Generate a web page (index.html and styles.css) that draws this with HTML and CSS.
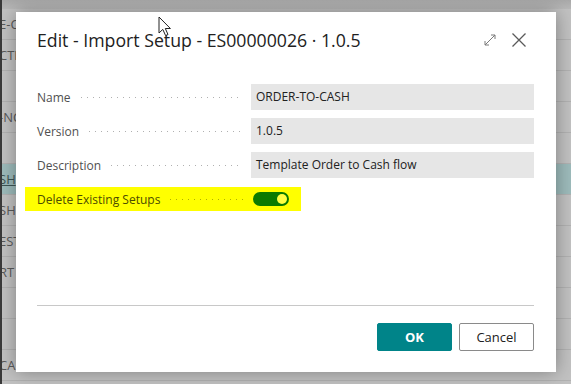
FILE: index.html
```html
<!DOCTYPE html>
<html lang="en">
<head>
  <meta charset="UTF-8" />
  <title>Edit - Import Setup</title>
  <link rel="stylesheet" href="styles.css">
</head>
<body>

  <!-- page behind the dialog (dimmed list) -->
  <div class="page">
    <div class="page-top"></div>
    <div class="row"><span>E-C</span></div>
    <div class="row"><span>CTF</span></div>
    <div class="row"><span></span></div>
    <div class="row"><span>-NC</span></div>
    <div class="row"><span></span></div>
    <div class="row selected"><span class="link">SH</span></div>
    <div class="row"><span>SH</span></div>
    <div class="row"><span>EST</span></div>
    <div class="row"><span>RT</span></div>
    <div class="row"><span></span></div>
    <div class="row"><span></span></div>
    <div class="row"><span>CA</span></div>
  </div>

  <div class="dialog">
    <div class="dialog-head">
      <h1>Edit - Import Setup - ES00000026 · 1.0.5</h1>
      <div class="head-icons">
        <svg width="14" height="14" viewBox="0 0 14 14" class="icon">
          <path d="M2 12 L12 2 M8 2 H12 V6 M2 8 V12 H6" fill="none" stroke="#7a7a7a" stroke-width="1"/>
        </svg>
        <svg width="16" height="16" viewBox="0 0 16 16" class="icon">
          <path d="M1.5 1.5 L14.5 14.5 M14.5 1.5 L1.5 14.5" fill="none" stroke="#5a5a5a" stroke-width="1.3"/>
        </svg>
      </div>
    </div>

    <div class="fields">
      <div class="field">
        <label class="caption">Name</label>
        <div class="value">ORDER-TO-CASH</div>
      </div>
      <div class="field">
        <label class="caption">Version</label>
        <div class="value">1.0.5</div>
      </div>
      <div class="field">
        <label class="caption">Description</label>
        <div class="value">Template Order to Cash flow</div>
      </div>
      <div class="field marked">
        <label class="caption">Delete Existing Setups</label>
        <div class="toggle"><span class="knob"></span></div>
      </div>
    </div>

    <div class="dialog-foot">
      <button class="btn primary">OK</button>
      <button class="btn">Cancel</button>
    </div>
  </div>

  <svg class="cursor" width="14" height="22" viewBox="0 0 14 22">
    <path d="M1 1 V17 L4.8 13.4 L7.6 19.6 L10 18.5 L7.3 12.5 L12.4 12.5 Z" fill="#fff" stroke="#222" stroke-width="1"/>
  </svg>

</body>
</html>
```

FILE: styles.css
```css
html {
  overflow: hidden;
}

body {
  margin: 0;
  width: 571px;
  height: 384px;
  overflow: hidden;
  position: relative;
  font-family: 'Open Sans', 'Noto Sans', sans-serif;
  background: #c2c2c2;
}

.page {
  border-left: 2px solid #3a3a3a;
  height: 100%;
  overflow: hidden;
}

.page-top {
  height: 9px;
  background: linear-gradient(#a9a9a9, #b9b9b9);
}

.row {
  height: 30px;
  border-bottom: 1px solid #b2b2b2;
  display: flex;
  align-items: center;
  font-size: 13px;
  color: #5a5a5a;
}

.row span {
  margin-left: -3px;
}

.row.selected {
  background: #9ebcbc;
}

.link {
  text-decoration: underline;
  color: #3f5656;
}

.dialog {
  position: absolute;
  left: 16px;
  top: 12px;
  width: 540px;
  height: 360px;
  background: #fff;
  box-shadow: 0 0 18px rgba(0, 0, 0, 0.35);
  display: flex;
  flex-direction: column;
  box-sizing: border-box;
  padding: 0 22px 0 21px;
}

.dialog-head {
  display: flex;
  align-items: center;
  justify-content: space-between;
  height: 56px;
}

.dialog-head h1 {
  margin: 0;
  font-size: 17.7px;
  font-weight: 400;
  color: #212121;
}

.head-icons {
  display: flex;
  align-items: center;
  gap: 14px;
  margin-right: 7px;
}

.icon {
  display: block;
}

.fields {
  margin-top: 16px;
  display: flex;
  flex-direction: column;
  gap: 8px;
  flex: 1;
}

.field {
  display: flex;
  align-items: center;
  height: 26px;
}

.caption {
  width: 214px;
  flex: none;
  display: flex;
  align-items: center;
  font-size: 12px;
  color: #505050;
}

.caption::after {
  content: "";
  flex: 1;
  height: 1px;
  margin: 1px 8px 0 10px;
  background: linear-gradient(to right, #b0b0b0 1px, transparent 1px) left center / 6px 1px repeat-x;
}

.value {
  flex: 1;
  height: 26px;
  line-height: 26px;
  padding-left: 5px;
  background: #e6e6e6;
  font-size: 12px;
  color: #212121;
}

.field.marked {
  margin: 1px 0 0 -12px;
  padding-left: 12px;
  width: 264px;
  height: 24px;
  background: #ffff00;
}

.field.marked .caption {
  color: #4c4c00;
}

.field.marked .caption::after {
  background: linear-gradient(to right, #b0b000 1px, transparent 1px) left center / 6px 1px repeat-x;
}

.toggle {
  margin-left: 2px;
  width: 36px;
  height: 14px;
  border-radius: 7px;
  background: #0b7a00;
  display: flex;
  align-items: center;
  justify-content: flex-end;
  padding-right: 2px;
  box-sizing: border-box;
}

.knob {
  width: 10px;
  height: 10px;
  border-radius: 50%;
  background: #ffff40;
}

.dialog-foot {
  border-top: 1px solid #c8c8c8;
  height: 67px;
  display: flex;
  justify-content: flex-end;
  align-items: flex-start;
  gap: 7px;
  padding-top: 17px;
  box-sizing: border-box;
}

.btn {
  width: 75px;
  height: 28px;
  font-family: inherit;
  font-size: 13px;
  color: #212121;
  background: #fff;
  border: 1px solid #8a8a8a;
  border-radius: 2px;
}

.btn.primary {
  background: #008489;
  border-color: #008489;
  color: #fff;
  font-weight: 700;
}

.cursor {
  position: absolute;
  left: 158px;
  top: 16px;
}
```
